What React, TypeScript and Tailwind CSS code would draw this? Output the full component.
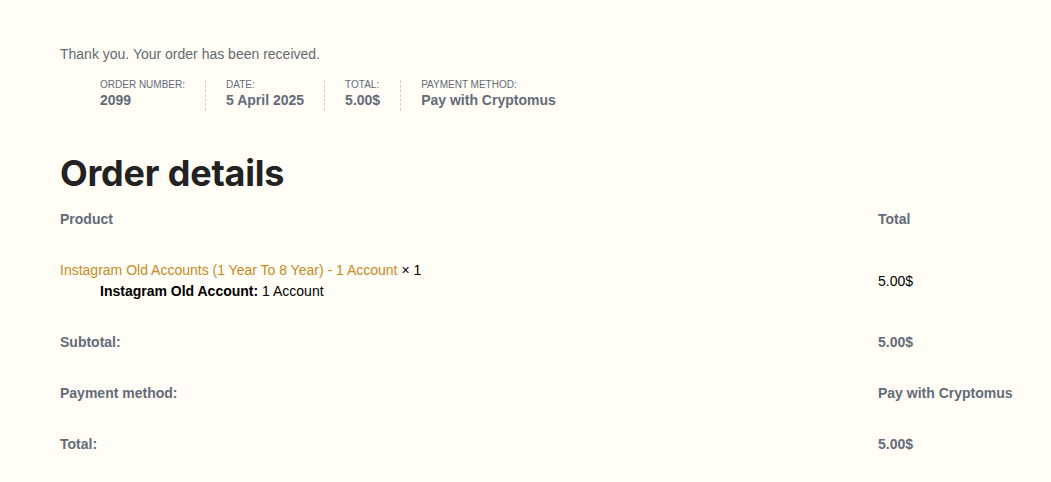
const overview = [
  { label: 'Order number:', value: '2099' },
  { label: 'Date:', value: '5 April 2025' },
  { label: 'Total:', value: '5.00$' },
  { label: 'Payment method:', value: 'Pay with Cryptomus' },
]

const totals = [
  { label: 'Subtotal:', value: '5.00$' },
  { label: 'Payment method:', value: 'Pay with Cryptomus' },
  { label: 'Total:', value: '5.00$' },
]

const App = () => {
  return (
    <div
      className="min-h-screen w-full bg-[#fffdf6] text-[#646b78] px-[60px] pt-[44px]"
      style={{ fontFamily: '"Liberation Sans", Arial, sans-serif' }}
    >
      <p className="text-[14px] leading-[21px] text-[#646970]">Thank you. Your order has been received.</p>

      <ul className="flex mt-[15px] pl-[40px]">
        {overview.map((item, i) => (
          <li
            key={item.label}
            className={
              i < overview.length - 1
                ? 'uppercase text-[10px] leading-none pr-[20px] mr-[20px] border-r border-dashed border-[#d3ced2]'
                : 'uppercase text-[10px] leading-none'
            }
          >
            {item.label}
            <strong className="block normal-case text-[14px] leading-[21px] font-bold">{item.value}</strong>
          </li>
        ))}
      </ul>

      <h2
        className="mt-[41px] text-[36px] leading-[42px] font-bold text-[#222222] tracking-[-0.2px]"
        style={{ fontFamily: 'Inter, "Noto Sans", sans-serif' }}
      >
        Order details
      </h2>

      <div className="grid grid-cols-[818px_1fr] text-[14px] leading-[21px]">
        <div className="py-[15px] font-bold">Product</div>
        <div className="py-[15px] font-bold">Total</div>

        <div className="py-[15px]">
          <div>
            <span className="text-[#c88a1e]">Instagram Old Accounts (1 Year To 8 Year) - 1 Account</span>
            <span className="text-black"> × 1</span>
          </div>
          <div className="pl-[40px] text-black">
            <strong>Instagram Old Account:</strong> 1 Account
          </div>
        </div>
        <div className="py-[15px] flex items-center text-black">5.00$</div>

        {totals.map(row => (
          <div key={row.label} className="contents">
            <div className="py-[15px] font-bold">{row.label}</div>
            <div className="py-[15px] font-bold whitespace-nowrap">{row.value}</div>
          </div>
        ))}
      </div>
    </div>
  )
}

export default App
